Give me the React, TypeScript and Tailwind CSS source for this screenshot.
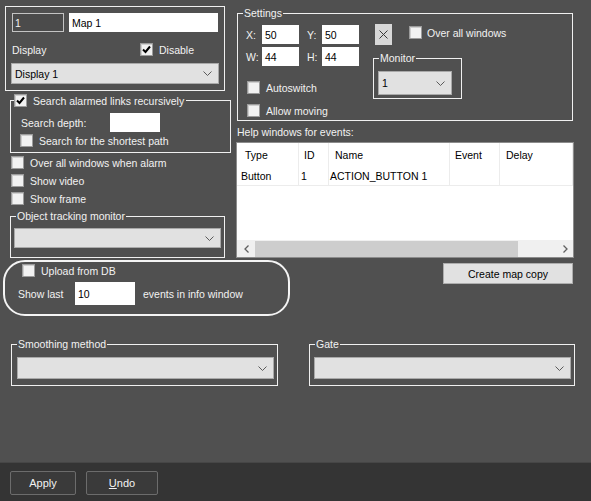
import React from 'react';

const Check: React.FC<{ checked?: boolean }> = ({ checked }) => (
  <span className="w-[13px] h-[13px] shrink-0 bg-[#f2f2f2] border border-[#9c9c9c] shadow-[inset_1px_1px_0_#cfcfcf] flex items-center justify-center">
    {checked && (
      <svg width="9" height="9" viewBox="0 0 9 9">
        <path d="M1 4.5 L3.5 7 L8 1.5" fill="none" stroke="#000" strokeWidth="2" />
      </svg>
    )}
  </span>
);

const Chevron = () => (
  <svg width="9" height="5" viewBox="0 0 9 5" className="shrink-0">
    <path d="M0.5 0.5 L4.5 4.5 L8.5 0.5" fill="none" stroke="#5a5a5a" strokeWidth="1" />
  </svg>
);

const Select: React.FC<{ value?: string; className: string }> = ({ value, className }) => (
  <div className={`flex items-center bg-[#e1e1e1] border border-[#a9a9a9] text-black pl-[3px] pr-[6px] ${className}`}>
    <span>{value}</span>
    <span className="ml-auto">
      <Chevron />
    </span>
  </div>
);

const Group: React.FC<{ label: string; className: string; children?: React.ReactNode }> = ({
  label,
  className,
  children,
}) => (
  <div className={`relative border border-[#f0f0f0] ${className}`}>
    <span className="absolute -top-[7px] left-[5px] px-[1px] bg-[#505050] leading-[12px]">{label}</span>
    {children}
  </div>
);

const CheckRow: React.FC<{ label: string; checked?: boolean; className?: string }> = ({
  label,
  checked,
  className = '',
}) => (
  <div className={`flex items-center gap-[6px] h-[13px] ${className}`}>
    <Check checked={checked} />
    <span>{label}</span>
  </div>
);

const cols = [
  { w: 'w-[62px]', head: 'Type', hp: 'pl-[8px]', cell: 'Button', cp: 'pl-[4px]' },
  { w: 'w-[30px]', head: 'ID', hp: 'pl-[5px]', cell: '1', cp: 'pl-[2px]' },
  { w: 'w-[121px]', head: 'Name', hp: 'pl-[6px]', cell: 'ACTION_BUTTON 1', cp: 'pl-[1px]' },
  { w: 'w-[50px]', head: 'Event', hp: 'pl-[5px]', cell: '', cp: '' },
  { w: 'flex-1', head: 'Delay', hp: 'pl-[6px]', cell: '', cp: '' },
];

export default function App() {
  return (
    <div className="w-[591px] h-[501px] bg-[#505050] flex flex-col overflow-hidden font-['Liberation_Sans',Arial,sans-serif] text-[10.5px] leading-[12px] text-[#f2f2f2]">
      <div className="flex h-[258px]">
        {/* left column */}
        <div className="w-[231px] pl-[5px] pt-[6px] flex flex-col">
          <div className="w-[220px] h-[85px] border border-[#f0f0f0] pl-[6px] pt-[6px]">
            <div className="flex gap-[5px]">
              <div className="w-[52px] h-[19px] border border-[#c4c4c4] bg-[#4b4b4b] px-[2px] flex items-center">1</div>
              <div className="w-[149px] h-[19px] bg-white text-black px-[3px] flex items-center">Map 1</div>
            </div>
            <div className="mt-[11px] h-[13px] flex items-center">
              <span className="w-[128px]">Display</span>
              <Check checked />
              <span className="ml-[6px]">Disable</span>
            </div>
            <Select value="Display 1" className="mt-[7px] -ml-[1px] w-[208px] h-[21px]" />
          </div>

          <div className="relative mt-[9px] ml-[5px] w-[221px] h-[53px] border border-[#f0f0f0] pl-[9px] pt-[12px]">
            <div className="absolute -top-[7px] left-[3px] flex items-center gap-[6px] pr-[2px] bg-[#505050]">
              <Check checked />
              <span>Search alarmed links recursively</span>
            </div>
            <div className="flex items-center h-[19px]">
              <span className="w-[90px] pl-[1px]">Search depth:</span>
              <div className="w-[50px] h-[19px] bg-white" />
            </div>
            <CheckRow label="Search for the shortest path" className="mt-[2px]" />
          </div>

          <CheckRow label="Over all windows when alarm" className="mt-[3px] ml-[6px]" />
          <CheckRow label="Show video" className="mt-[5px] ml-[6px]" />
          <CheckRow label="Show frame" className="mt-[5px] ml-[6px]" />

          <Group label="Object tracking monitor" className="mt-[11px] ml-[5px] w-[215px] h-[42px] pl-[3px] pt-[11px]">
            <Select className="w-[207px] h-[20px]" />
          </Group>
        </div>

        {/* right column */}
        <div className="w-[338px] ml-[5px] flex flex-col">
          <Group label="Settings" className="mt-[13px] ml-[1px] w-[336px] h-[108px] flex">
            <div className="pl-[7px] pt-[11px] flex flex-col">
              {[
                ['X:', '50', 'Y:', '50'],
                ['W:', '44', 'H:', '44'],
              ].map((r, i) => (
                <div key={i} className={`flex items-center h-[19px] ${i ? 'mt-[3px]' : ''}`}>
                  <span className="w-[17px] pl-[1px]">{r[0]}</span>
                  <div className="w-[37px] h-[19px] bg-white text-black pl-[3px] flex items-center">{r[1]}</div>
                  <span className="ml-[8px] w-[15px]">{r[2]}</span>
                  <div className="w-[37px] h-[19px] bg-white text-black pl-[3px] flex items-center">{r[3]}</div>
                </div>
              ))}
              <CheckRow label="Autoswitch" className="mt-[15px] ml-[2px]" />
              <CheckRow label="Allow moving" className="mt-[10px] ml-[2px]" />
            </div>
            <div className="ml-[16px] pt-[10px] flex flex-col">
              <div className="flex items-start">
                <div className="w-[17px] h-[21px] bg-[#d8d8d8] flex items-center justify-center">
                  <svg width="9" height="9" viewBox="0 0 9 9">
                    <path d="M0.5 0.5 L8.5 8.5 M8.5 0.5 L0.5 8.5" stroke="#3a3a3a" strokeWidth="1" />
                  </svg>
                </div>
                <div className="ml-[17px] mt-[2px] flex items-center gap-[5px] h-[13px]">
                  <Check />
                  <span>Over all windows</span>
                </div>
              </div>
              <Group label="Monitor" className="mt-[13px] -ml-[2px] w-[89px] h-[41px] pl-[4px] pt-[12px]">
                <Select value="1" className="w-[74px] h-[24px]" />
              </Group>
            </div>
          </Group>

          <div className="mt-[5px] ml-[1px] h-[12px]">Help windows for events:</div>

          <div className="mt-[4px] w-[338px] h-[116px] bg-white border border-[#8c8c8c] flex flex-col text-black">
            <div className="flex h-[24px]">
              {cols.map((c) => (
                <div key={c.head} className={`${c.w} ${c.hp} flex items-center border-r border-[#ececec]`}>
                  {c.head}
                </div>
              ))}
            </div>
            <div className="flex h-[19px] border-b border-[#ececec]">
              {cols.map((c) => (
                <div key={c.head} className={`${c.w} ${c.cp} flex items-center border-r border-[#ececec]`}>
                  {c.cell}
                </div>
              ))}
            </div>
            <div className="flex-1" />
            <div className="h-[17px] bg-[#f0f0f0] flex items-center">
              <div className="w-[18px] flex justify-center">
                <svg width="5" height="8" viewBox="0 0 5 8">
                  <path d="M4.5 0.5 L1 4 L4.5 7.5" fill="none" stroke="#606060" strokeWidth="1.3" />
                </svg>
              </div>
              <div className="w-[263px] h-[16px] bg-[#cdcdcd]" />
              <div className="flex-1 flex justify-end pr-[5px]">
                <svg width="5" height="8" viewBox="0 0 5 8">
                  <path d="M0.5 0.5 L4 4 L0.5 7.5" fill="none" stroke="#606060" strokeWidth="1.3" />
                </svg>
              </div>
            </div>
          </div>
        </div>
      </div>

      <div className="flex mt-[2px]">
        <div className="ml-[3px] w-[287px] h-[56px] border-2 border-[#f4f4f4] rounded-[22px] pt-[2px]">
          <CheckRow label="Upload from DB" className="ml-[17px]" />
          <div className="mt-[5px] ml-[13px] flex items-center">
            <span className="w-[57px]">Show last</span>
            <div className="w-[60px] h-[23px] bg-white text-black pl-[3px] flex items-center">10</div>
            <span className="ml-[8px]">events in info window</span>
          </div>
        </div>
        <div className="ml-[153px] mt-[3px] w-[130px] h-[21px] bg-[#e1e1e1] border border-[#adadad] text-black flex items-center justify-center">
          Create map copy
        </div>
      </div>

      <div className="flex mt-[28px]">
        <Group label="Smoothing method" className="ml-[11px] w-[267px] h-[42px] pl-[5px] pt-[12px]">
          <Select className="w-[257px] h-[22px]" />
        </Group>
        <Group label="Gate" className="ml-[31px] w-[266px] h-[42px] pl-[4px] pt-[12px]">
          <Select className="w-[257px] h-[22px]" />
        </Group>
      </div>

      <div className="flex-1" />

      <div className="h-[39px] bg-[#343434] border-t border-[#464646] flex pt-[8px] text-[11px]">
        <div className="ml-[10px] w-[66px] h-[24px] border border-[#6c6c6c] bg-[#3a3a3a] rounded-[2px] flex items-center justify-center">
          Apply
        </div>
        <div className="ml-[10px] w-[72px] h-[24px] border border-[#6c6c6c] bg-[#3a3a3a] rounded-[2px] flex items-center justify-center">
          <span>
            <span className="underline">U</span>ndo
          </span>
        </div>
      </div>
    </div>
  );
}
